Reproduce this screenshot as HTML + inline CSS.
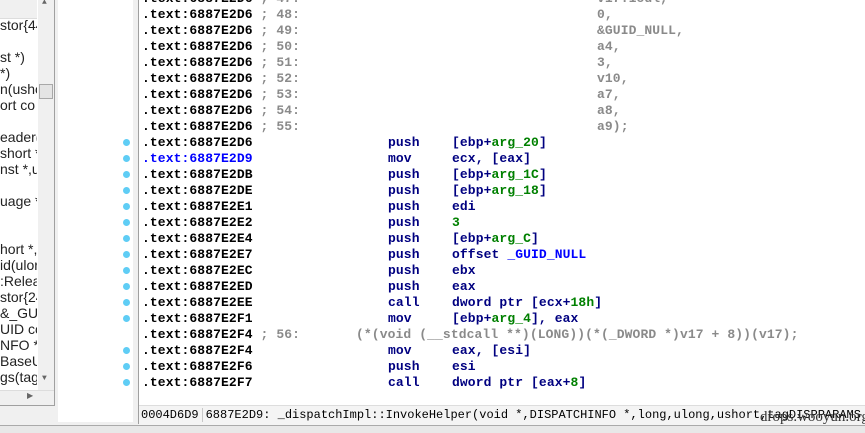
<!DOCTYPE html>
<html><head><meta charset="utf-8"><style>
*{margin:0;padding:0}
body{width:865px;height:432px;overflow:hidden;background:#f0f0f0;position:relative;font-family:"Liberation Mono",monospace}
.abs{position:absolute}
#left{left:0;top:0;width:54px;height:405px;background:#fff;border-right:1px solid #a0a0a0;border-bottom:1px solid #a0a0a0;overflow:hidden}
#left .t{position:absolute;left:0;font:14px "Liberation Sans","Noto Sans CJK SC",sans-serif;color:#222;white-space:nowrap;width:37px;overflow:hidden}
#mid{left:58px;top:0;width:75px;height:422px;background:#fff}
.dot{position:absolute;left:123px;width:7px;height:7px;border-radius:4px;background:#5fcdf5}
#main{left:138px;top:0;width:727px;height:424px;background:#fff;border-left:1px solid #a0a0a0;overflow:hidden}
#inner{position:absolute;left:0;top:1px;width:727px;height:430px}
.r{position:absolute;height:16px;line-height:16px;font-size:13px;font-weight:bold;white-space:pre;letter-spacing:0.1px}
.a{color:#000}.b{color:#0000ff}.g{color:#8a8a8a}.n{color:#000080}.gr{color:#008000}.bl{color:#0000ff}
#status{left:139px;top:405px;width:726px;height:19px;background:#f4f4f4;border-top:1px solid #ddd;font-size:12px;line-height:19px;white-space:pre;color:#000}
</style></head><body>
<div id="left" class="abs">
<div class="abs" style="left:0;top:0;width:37px;height:18px;background:#f0f0f0;border-bottom:1px solid #ddd"></div>
<div class="t" style="top:17px">stor{44</div>
<div class="t" style="top:49px">st *)</div>
<div class="t" style="top:65px">*)</div>
<div class="t" style="top:81px">n(usho</div>
<div class="t" style="top:97px">ort co</div>
<div class="t" style="top:129px">eader(</div>
<div class="t" style="top:145px">short *</div>
<div class="t" style="top:161px">nst *,us</div>
<div class="t" style="top:193px">uage *</div>
<div class="t" style="top:241px">hort *,</div>
<div class="t" style="top:257px">id(ulor</div>
<div class="t" style="top:273px">:Releas</div>
<div class="t" style="top:289px">stor{24</div>
<div class="t" style="top:305px">&amp;_GUID</div>
<div class="t" style="top:321px">UID cc</div>
<div class="t" style="top:337px">NFO *,</div>
<div class="t" style="top:353px">BaseU</div>
<div class="t" style="top:369px">gs(tagD</div>
<div class="abs" style="left:38px;top:0;width:16px;height:390px;background:#f0f0f0"></div>
<div class="abs" style="left:39px;top:84px;width:14px;height:15px;background:#e4e4e4;border:1px solid #a8a8a8;box-sizing:border-box"></div>
<div class="abs" style="left:42px;top:-2px;font-size:8px;color:#666">▲</div>
<div class="abs" style="left:42px;top:374px;font-size:8px;color:#666">▼</div>
<div class="abs" style="left:0;top:390px;width:54px;height:15px;background:#f0f0f0;border-top:1px solid #ddd"></div>
<div class="abs" style="left:27px;top:391px;font-size:8px;color:#666">▶</div>
</div>
<div id="mid" class="abs"></div>
<div class="dot" style="top:139px"></div><div class="dot" style="top:155px"></div><div class="dot" style="top:171px"></div><div class="dot" style="top:187px"></div><div class="dot" style="top:203px"></div><div class="dot" style="top:219px"></div><div class="dot" style="top:235px"></div><div class="dot" style="top:251px"></div><div class="dot" style="top:267px"></div><div class="dot" style="top:283px"></div><div class="dot" style="top:299px"></div><div class="dot" style="top:315px"></div><div class="dot" style="top:347px"></div><div class="dot" style="top:363px"></div><div class="dot" style="top:379px"></div>
<div id="main" class="abs"><div id="inner">
<div class="r" style="top:-10px;left:3px"><span class="a">.text:6887E2D6</span> <span class="g">; 47:</span></div>
<div class="r g" style="top:-10px;left:458px">v17.1odl,</div>
<div class="r" style="top:6px;left:3px"><span class="a">.text:6887E2D6</span> <span class="g">; 48:</span></div><div class="r g" style="top:6px;left:458px">0,</div>
<div class="r" style="top:22px;left:3px"><span class="a">.text:6887E2D6</span> <span class="g">; 49:</span></div><div class="r g" style="top:22px;left:458px">&amp;GUID_NULL,</div>
<div class="r" style="top:38px;left:3px"><span class="a">.text:6887E2D6</span> <span class="g">; 50:</span></div><div class="r g" style="top:38px;left:458px">a4,</div>
<div class="r" style="top:54px;left:3px"><span class="a">.text:6887E2D6</span> <span class="g">; 51:</span></div><div class="r g" style="top:54px;left:458px">3,</div>
<div class="r" style="top:70px;left:3px"><span class="a">.text:6887E2D6</span> <span class="g">; 52:</span></div><div class="r g" style="top:70px;left:458px">v10,</div>
<div class="r" style="top:86px;left:3px"><span class="a">.text:6887E2D6</span> <span class="g">; 53:</span></div><div class="r g" style="top:86px;left:458px">a7,</div>
<div class="r" style="top:102px;left:3px"><span class="a">.text:6887E2D6</span> <span class="g">; 54:</span></div><div class="r g" style="top:102px;left:458px">a8,</div>
<div class="r" style="top:118px;left:3px"><span class="a">.text:6887E2D6</span> <span class="g">; 55:</span></div><div class="r g" style="top:118px;left:458px">a9);</div>

<div class="r a" style="top:134px;left:3px">.text:6887E2D6</div><div class="r n" style="top:134px;left:249px">push</div><div class="r n" style="top:134px;left:313px">[ebp+<span class="gr">arg_20</span>]</div>
<div class="r b" style="top:150px;left:3px">.text:6887E2D9</div><div class="r n" style="top:150px;left:249px">mov</div><div class="r n" style="top:150px;left:313px">ecx, [eax]</div>
<div class="r a" style="top:166px;left:3px">.text:6887E2DB</div><div class="r n" style="top:166px;left:249px">push</div><div class="r n" style="top:166px;left:313px">[ebp+<span class="gr">arg_1C</span>]</div>
<div class="r a" style="top:182px;left:3px">.text:6887E2DE</div><div class="r n" style="top:182px;left:249px">push</div><div class="r n" style="top:182px;left:313px">[ebp+<span class="gr">arg_18</span>]</div>
<div class="r a" style="top:198px;left:3px">.text:6887E2E1</div><div class="r n" style="top:198px;left:249px">push</div><div class="r n" style="top:198px;left:313px">edi</div>
<div class="r a" style="top:214px;left:3px">.text:6887E2E2</div><div class="r n" style="top:214px;left:249px">push</div><div class="r gr" style="top:214px;left:313px">3</div>
<div class="r a" style="top:230px;left:3px">.text:6887E2E4</div><div class="r n" style="top:230px;left:249px">push</div><div class="r n" style="top:230px;left:313px">[ebp+<span class="gr">arg_C</span>]</div>
<div class="r a" style="top:246px;left:3px">.text:6887E2E7</div><div class="r n" style="top:246px;left:249px">push</div><div class="r n" style="top:246px;left:313px">offset <span class="bl">_GUID_NULL</span></div>
<div class="r a" style="top:262px;left:3px">.text:6887E2EC</div><div class="r n" style="top:262px;left:249px">push</div><div class="r n" style="top:262px;left:313px">ebx</div>
<div class="r a" style="top:278px;left:3px">.text:6887E2ED</div><div class="r n" style="top:278px;left:249px">push</div><div class="r n" style="top:278px;left:313px">eax</div>
<div class="r a" style="top:294px;left:3px">.text:6887E2EE</div><div class="r n" style="top:294px;left:249px">call</div><div class="r n" style="top:294px;left:313px">dword ptr [ecx+<span class="gr">18h</span>]</div>
<div class="r a" style="top:310px;left:3px">.text:6887E2F1</div><div class="r n" style="top:310px;left:249px">mov</div><div class="r n" style="top:310px;left:313px">[ebp+<span class="gr">arg_4</span>], eax</div>
<div class="r" style="top:326px;left:3px"><span class="a">.text:6887E2F4</span> <span class="g">; 56:</span></div><div class="r g" style="top:326px;left:217px">(*(void (__stdcall **)(LONG))(*(_DWORD *)v17 + 8))(v17);</div>
<div class="r a" style="top:342px;left:3px">.text:6887E2F4</div><div class="r n" style="top:342px;left:249px">mov</div><div class="r n" style="top:342px;left:313px">eax, [esi]</div>
<div class="r a" style="top:358px;left:3px">.text:6887E2F6</div><div class="r n" style="top:358px;left:249px">push</div><div class="r n" style="top:358px;left:313px">esi</div>
<div class="r a" style="top:374px;left:3px">.text:6887E2F7</div><div class="r n" style="top:374px;left:249px">call</div><div class="r n" style="top:374px;left:313px">dword ptr [eax+<span class="gr">8</span>]</div>
</div></div>
<div id="status" class="abs"><span style="padding-left:2px">0004D6D9</span><span style="border-left:1px solid #c8c8c8;margin-left:3px;padding-left:3px">6887E2D9: _dispatchImpl::InvokeHelper(void *,DISPATCHINFO *,long,ulong,ushort,tagDISPPARAMS *,t</span></div>
<div class="abs" style="left:760px;top:409px;font:15px 'Liberation Serif',serif;color:#333">drops.wooyun.org</div>
<div class="abs" style="left:0;top:425px;width:865px;height:7px;background:#e8e8e8;border-top:1px solid #aaa"></div>
</body></html>
